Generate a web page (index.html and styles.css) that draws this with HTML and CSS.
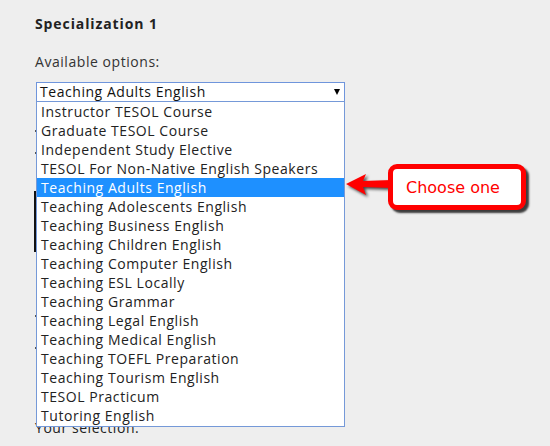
FILE: index.html
```html
<!DOCTYPE html>
<html>
<head>
<meta charset="utf-8">
<link rel="stylesheet" href="styles.css">
</head>
<body>
<div class="page">
  <h2 class="title">Specialization 1</h2>
  <p class="label">Available options:</p>
  <div class="select-wrap">
    <div class="select">
      <span>Teaching Adults English</span>
      <span class="caret"></span>
    </div>
    <ul class="list">
      <li>Instructor TESOL Course</li>
      <li>Graduate TESOL Course</li>
      <li>Independent Study Elective</li>
      <li>TESOL For Non-Native English Speakers</li>
      <li class="active">Teaching Adults English</li>
      <li>Teaching Adolescents English</li>
      <li>Teaching Business English</li>
      <li>Teaching Children English</li>
      <li>Teaching Computer English</li>
      <li>Teaching ESL Locally</li>
      <li>Teaching Grammar</li>
      <li>Teaching Legal English</li>
      <li>Teaching Medical English</li>
      <li>Teaching TOEFL Preparation</li>
      <li>Teaching Tourism English</li>
      <li>TESOL Practicum</li>
      <li>Tutoring English</li>
    </ul>
  </div>
  <div class="behind">
    <span class="tick t1"></span>
    <span class="tick t2"></span>
    <div class="video"></div>
    <span class="tick t3"></span>
    <span class="tick t4"></span>
    <p class="line">Your selection:</p>
  </div>

  <div class="callout">
    <svg class="arrow" width="50" height="26" viewBox="0 0 50 26">
      <polygon points="2,12 22,2 19,9 48,8 48,16 19,15 22,23" fill="#ff0000"/>
    </svg>
    <div class="bubble">Choose one</div>
  </div>
</div>
</body>
</html>
```

FILE: styles.css
```css
html, body {
  margin: 0;
  padding: 0;
  background: #eeeeee;
}

.page {
  position: relative;
  width: 550px;
  height: 446px;
  overflow: hidden;
  padding: 15px 0 0 35px;
  box-sizing: border-box;
  font-family: "Open Sans", "Liberation Sans", sans-serif;
  font-size: 14px;
  letter-spacing: 0.55px;
  color: #333333;
}

.title {
  margin: 0;
  font-size: 14px;
  line-height: 18px;
  font-weight: 700;
  letter-spacing: 0.9px;
  color: #222222;
}

.label {
  margin: 20px 0 0;
  line-height: 18px;
}

.select-wrap {
  position: relative;
  margin-top: 11px;
  margin-left: 1px;
  width: 309px;
}

.select {
  display: flex;
  align-items: center;
  justify-content: space-between;
  height: 20px;
  box-sizing: border-box;
  border: 1px solid #6f95dc;
  background: #ffffff;
  padding: 0 4px 0 3px;
  line-height: 18px;
  color: #111111;
}

.caret {
  width: 0;
  height: 0;
  border-left: 3.5px solid transparent;
  border-right: 3.5px solid transparent;
  border-top: 6px solid #000000;
}

.list {
  position: absolute;
  top: 19px;
  left: 0;
  width: 309px;
  box-sizing: border-box;
  margin: 0;
  padding: 0 0 1px;
  list-style: none;
  background: #ffffff;
  border: 1px solid #7599d8;
  z-index: 2;
}

.list li {
  height: 19px;
  line-height: 19px;
  padding-left: 4px;
  color: #222222;
  white-space: nowrap;
}

.list li.active {
  background: #1e90ff;
  color: #ffffff;
}

.behind {
  display: flex;
  flex-direction: column;
  align-items: flex-start;
}

.tick {
  display: block;
  width: 2px;
  height: 2px;
  background: #555555;
}

.t1 { margin-top: 28px; }
.t2 { margin-top: 20px; }

.video {
  margin-top: 37px;
  margin-left: -1px;
  width: 200px;
  height: 61px;
  background: #111111;
}

.t3 { margin-top: 63px; }
.t4 { margin-top: 30px; }

.line {
  margin: 70px 0 0;
  line-height: 18px;
  color: #222222;
}

.callout {
  position: absolute;
  left: 344px;
  top: 164px;
  display: flex;
  align-items: flex-start;
  z-index: 3;
  letter-spacing: 0;
}

.arrow {
  margin-top: 8px;
  margin-right: -6px;
  filter: drop-shadow(2px 2px 1.5px rgba(0, 0, 0, 0.7));
}

.bubble {
  width: 138px;
  height: 46px;
  box-sizing: border-box;
  border: 5px solid #ff0000;
  border-radius: 9px;
  background: #ffffff;
  box-shadow: 3px 3px 2px rgba(0, 0, 0, 0.75);
  padding-left: 13px;
  display: flex;
  align-items: center;
  font-family: "DejaVu Sans", Verdana, sans-serif;
  font-size: 16px;
  color: #ff0000;
  position: relative;
  z-index: 1;
}
```
